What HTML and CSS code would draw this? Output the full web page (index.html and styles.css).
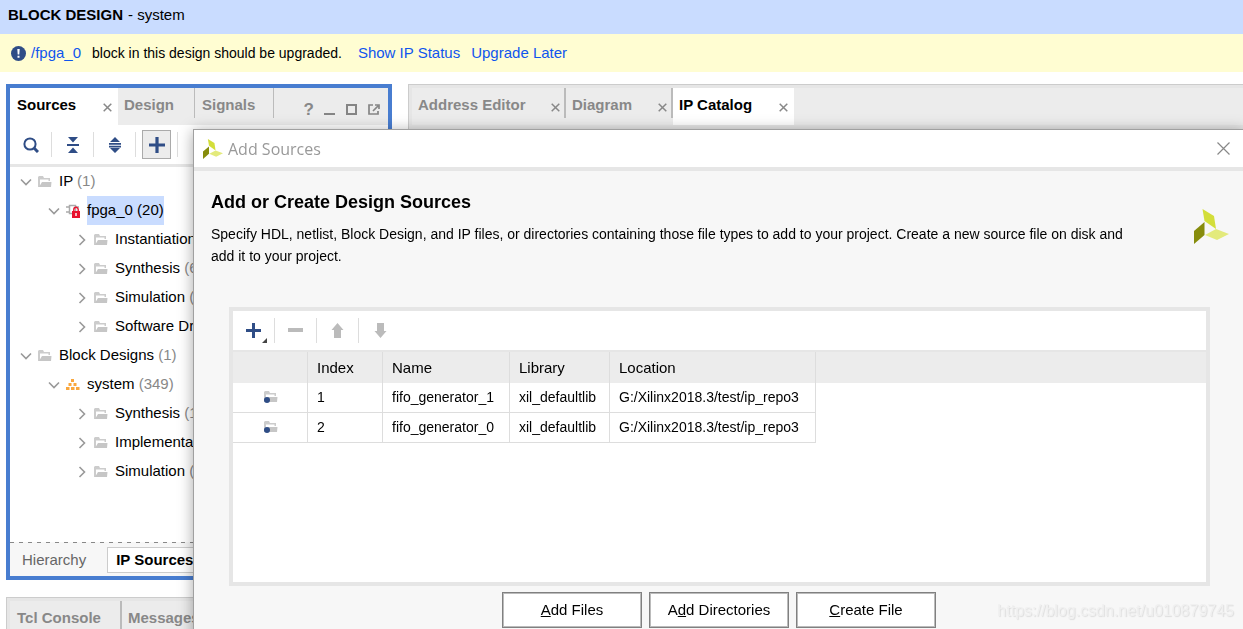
FILE: index.html
```
<!DOCTYPE html>
<html lang="en">
<head>
    <meta charset="UTF-8">
    <meta name="viewport" content="width=device-width, initial-scale=1.0">
    <title>Block Design - system</title>
    <link rel="stylesheet" href="styles.css">
</head>
<body>
    <!-- Shared icons -->
    <svg class="sprite" aria-hidden="true">
        <symbol id="close" viewBox="0 0 9 9"><path d="M.7.7l7.6 7.6M8.3.7L.7 8.3" fill="none" stroke="currentColor" stroke-width="1.5"/></symbol>
        <symbol id="down" viewBox="0 0 12 12"><path d="M1 3.5l5 5 5-5" fill="none" stroke="#999" stroke-width="1.6"/></symbol>
        <symbol id="right" viewBox="0 0 12 12"><path d="M3.5 1l5 5-5 5" fill="none" stroke="#999" stroke-width="1.6"/></symbol>
        <symbol id="folder" viewBox="0 0 14 12"><path d="M0 1l1-1h4l1 2h6v3h-1.500V3.500H2V11H0z" fill="#ccc"/><path d="M4 6h9.500L13 11H1z" fill="#c6c6c6"/></symbol>
        <symbol id="plus" viewBox="0 0 15 15"><path d="M6 0h3v6h6v3H9v6H6V9H0V6h6z" fill="#2f4d86"/></symbol>
        <symbol id="logo" viewBox="0 0 35 35"><path d="M8.500 0L20 7l2 13-11.500-8z" fill="#d3de3a"/><path d="M0 22l10.500-9v13L0 35z" fill="#868c0c"/><path d="M11 26l11-6 13 5-12 6z" fill="#e3ea7c"/></symbol>
    </svg>

    <header class="title-bar"><h1>BLOCK DESIGN</h1><span>- system</span></header>

    <div class="notice">
        <svg class="notice-icon" viewBox="0 0 15 15"><circle cx="7.500" cy="7.500" r="7.500" fill="#2f4d86"/><path d="M6.300 3h2.400l-.4 5.500H6.700zM6.500 9.800h2v2h-2z" fill="#fff"/></svg>
        <a href="#">/fpga_0</a>
        <span class="notice-text">block in this design should be upgraded.</span>
        <a href="#" class="notice-action">Show IP Status</a>
        <a href="#" class="notice-action">Upgrade Later</a>
    </div>

    <main class="workspace">
        <section class="panel sources">
            <div class="tabs">
                <div class="tab active tab-sources"><button>Sources</button><button class="close" aria-label="Close Sources"><svg><use href="#close"/></svg></button></div>
                <div class="tab tab-design"><button>Design</button></div>
                <div class="tab tab-signals"><button>Signals</button></div>
                <div class="window-tools">
                    <button aria-label="Help">?</button>
                    <button aria-label="Minimize"><svg viewBox="0 0 12 12"><path d="M0 10h11" stroke="#858585" stroke-width="2"/></svg></button>
                    <button aria-label="Maximize"><svg viewBox="0 0 12 12"><path d="M1 1h9v9H1z" fill="none" stroke="#858585" stroke-width="2"/></svg></button>
                    <button aria-label="Float"><svg viewBox="0 0 12 12"><path d="M5 1H1v9h9V7M5 7l5-5M7 1h4v4" fill="none" stroke="#858585" stroke-width="1.700"/></svg></button>
                </div>
            </div>
            <div class="toolbar">
                <button aria-label="Search"><svg viewBox="0 0 16 16"><circle cx="7" cy="7" r="5.600" fill="none" stroke="#2f4d86" stroke-width="2"/><path d="M11 11l4 4" stroke="#2f4d86" stroke-width="3"/></svg></button>
                <button aria-label="Collapse all"><svg viewBox="0 0 16 16"><path d="M3 0h10L8 5.500zM3 16h10l-5-5.500zM2 7h12v2H2z" fill="#2f4d86"/></svg></button>
                <button aria-label="Expand all"><svg viewBox="0 0 16 16"><path d="M8 0l5 5H3zM8 16l-5-5h10zM2 6h12v1.700H2zM2 8.700h12v1.700H2z" fill="#2f4d86"/></svg></button>
                <button class="pressed" aria-label="Add sources"><svg viewBox="0 0 15 15"><use href="#plus"/></svg></button>
                <span class="tool-end"></span>
            </div>
            <ul class="tree">
                <li>
                    <div class="node"><button aria-label="Collapse"><svg><use href="#down"/></svg></button><svg class="icon"><use href="#folder"/></svg><span class="label">IP <small>(1)</small></span></div>
                    <ul>
                        <li>
                            <div class="node selected"><button aria-label="Collapse"><svg><use href="#down"/></svg></button><svg class="icon" viewBox="0 0 14 14"><path d="M0 3h3M0 8h3M9 3h4M3.500 1.500h6v8h-6z" fill="none" stroke="#aaa" stroke-width="1.500"/><path d="M6 7h8v7H6z" fill="#e8112d"/><path d="M7.800 7V5.500a2.200 2.200 0 0 1 4.400 0V7" fill="none" stroke="#e8112d" stroke-width="1.400"/><path d="M9.300 9h1.400v3H9.300z" fill="#fff"/></svg><span class="label">fpga_0 (20)</span></div>
                            <ul>
                                <li class="node"><button aria-label="Expand"><svg><use href="#right"/></svg></button><svg class="icon"><use href="#folder"/></svg><span class="label">Instantiation</span></li>
                                <li class="node"><button aria-label="Expand"><svg><use href="#right"/></svg></button><svg class="icon"><use href="#folder"/></svg><span class="label">Synthesis <small>(6)</small></span></li>
                                <li class="node"><button aria-label="Expand"><svg><use href="#right"/></svg></button><svg class="icon"><use href="#folder"/></svg><span class="label">Simulation <small>(6)</small></span></li>
                                <li class="node"><button aria-label="Expand"><svg><use href="#right"/></svg></button><svg class="icon"><use href="#folder"/></svg><span class="label">Software Driver</span></li>
                            </ul>
                        </li>
                    </ul>
                </li>
                <li>
                    <div class="node"><button aria-label="Collapse"><svg><use href="#down"/></svg></button><svg class="icon"><use href="#folder"/></svg><span class="label">Block Designs <small>(1)</small></span></div>
                    <ul>
                        <li>
                            <div class="node"><button aria-label="Collapse"><svg><use href="#down"/></svg></button><svg class="icon" viewBox="0 0 14 14"><path d="M5 1h3v3H5zM2.500 5h3v3h-3zM7.500 5h3v3h-3zM0 9h3.500v3H0zM5 9h3.500v3H5zM10 9h3.500v3H10z" fill="#f9a73e"/></svg><span class="label">system <small>(349)</small></span></div>
                            <ul>
                                <li class="node"><button aria-label="Expand"><svg><use href="#right"/></svg></button><svg class="icon"><use href="#folder"/></svg><span class="label">Synthesis <small>(1)</small></span></li>
                                <li class="node"><button aria-label="Expand"><svg><use href="#right"/></svg></button><svg class="icon"><use href="#folder"/></svg><span class="label">Implementation</span></li>
                                <li class="node"><button aria-label="Expand"><svg><use href="#right"/></svg></button><svg class="icon"><use href="#folder"/></svg><span class="label">Simulation <small>(1)</small></span></li>
                            </ul>
                        </li>
                    </ul>
                </li>
            </ul>
            <div class="views">
                <button>Hierarchy</button>
                <button class="current">IP Sources</button>
            </div>
        </section>

        <section class="panel editor">
            <div class="tabs">
                <div class="tab tab-address"><button>Address Editor</button><button class="close" aria-label="Close Address Editor"><svg><use href="#close"/></svg></button></div>
                <div class="tab tab-diagram"><button>Diagram</button><button class="close" aria-label="Close Diagram"><svg><use href="#close"/></svg></button></div>
                <div class="tab active tab-catalog"><button>IP Catalog</button><button class="close" aria-label="Close IP Catalog"><svg><use href="#close"/></svg></button></div>
            </div>
        </section>
    </main>

    <section class="panel console">
        <div class="tabs">
            <div class="tab tab-tcl"><button>Tcl Console</button></div>
            <div class="tab tab-messages"><button>Messages</button></div>
        </div>
    </section>

    <div class="dialog" role="dialog" aria-labelledby="dialogTitle">
        <div class="dialog-title">
            <svg viewBox="0 0 35 35"><use href="#logo"/></svg>
            <span id="dialogTitle">Add Sources</span>
            <button aria-label="Close"><svg viewBox="0 0 13 13"><path d="M.5.5l12 12M12.500.5l-12 12" fill="none" stroke="#888" stroke-width="1.200"/></svg></button>
        </div>
        <div class="dialog-intro">
            <div>
                <h2>Add or Create Design Sources</h2>
                <p>Specify HDL, netlist, Block Design, and IP files, or directories containing those file types to add to your project. Create a new source file on disk and add it to your project.</p>
            </div>
            <svg class="brand" viewBox="0 0 35 35"><use href="#logo"/></svg>
        </div>
        <div class="file-box">
            <div class="file-tools">
                <button aria-label="Add"><svg viewBox="0 0 15 15"><use href="#plus"/></svg><span class="corner"></span></button>
                <button aria-label="Remove" disabled><svg viewBox="0 0 15 15"><path d="M0 5h15v4H0z" fill="#bbb"/></svg></button>
                <button aria-label="Move up" disabled><svg viewBox="0 0 15 15"><path d="M7.500 0l6 7H11v8H4V7H1.500z" fill="#bbb"/></svg></button>
                <button aria-label="Move down" disabled><svg viewBox="0 0 15 15"><path d="M7.500 15l6-7H11V0H4v8H1.500z" fill="#bbb"/></svg></button>
            </div>
            <table>
                <colgroup>
                    <col class="col-type"><col class="col-index"><col class="col-name"><col class="col-library"><col class="col-location"><col>
                </colgroup>
                <thead>
                    <tr><th></th><th>Index</th><th>Name</th><th>Library</th><th>Location</th><th></th></tr>
                </thead>
                <tbody>
                    <tr>
                        <td><svg viewBox="0 0 14 12"><use href="#folder"/><circle cx="3" cy="9" r="3" fill="#2f4d86"/></svg></td>
                        <td>1</td><td>fifo_generator_1</td><td>xil_defaultlib</td><td>G:/Xilinx2018.3/test/ip_repo3</td><td></td>
                    </tr>
                    <tr>
                        <td><svg viewBox="0 0 14 12"><use href="#folder"/><circle cx="3" cy="9" r="3" fill="#2f4d86"/></svg></td>
                        <td>2</td><td>fifo_generator_0</td><td>xil_defaultlib</td><td>G:/Xilinx2018.3/test/ip_repo3</td><td></td>
                    </tr>
                </tbody>
            </table>
        </div>
        <div class="dialog-buttons">
            <button><u>A</u>dd Files</button>
            <button>A<u>d</u>d Directories</button>
            <button><u>C</u>reate File</button>
        </div>
        <span class="watermark">https://blog.csdn.net/u010879745</span>
    </div>
</body>
</html>
```
FILE: styles.css
```
* {
    box-sizing: border-box;
}
body {
    display: flex;
    flex-direction: column;
    height: 100vh;
    margin: 0;
    overflow: hidden;
    background-color: #fff;
    color: #000;
    font: 15px/20px "Liberation Sans", Arial, sans-serif;
}
button {
    padding: 0;
    border: none;
    background: none;
    color: inherit;
    font: inherit;
}
svg {
    display: block;
    flex: none;
}
ul {
    margin: 0;
    padding: 0;
    list-style: none;
}
a {
    color: #0f55ee;
    text-decoration: none;
}
.sprite {
    display: none;
}

/* Top bars */
.title-bar {
    display: flex;
    gap: 5px;
    padding: 5px 8px 9px;
    background-color: #c9dcff;
}
.title-bar h1 {
    margin: 0;
    font-size: 15px;
    line-height: 20px;
}
.notice {
    display: flex;
    align-items: center;
    height: 38px;
    padding: 0 11px;
    background-color: #fffdd2;
}
.notice-icon {
    width: 15px;
    height: 15px;
    margin-right: 5px;
}
.notice-text {
    margin: 0 5px 0 11px;
    font-size: 14px;
}
.notice-action {
    margin-left: 11px;
}

/* Panels and tabs */
.workspace {
    display: grid;
    grid-template-columns: 386px 1fr;
    gap: 16px;
    flex: 1;
    min-height: 0;
    padding: 12px 0 0 6px;
}
.panel {
    display: flex;
    flex-direction: column;
    min-width: 0;
}
.sources {
    border: 4px solid #487dd0;
}
.editor,
.console {
    border: solid #ccc;
    border-width: 1px 0 0 1px;
    padding: 3px 0 0 3px;
    background-color: #e6e6e6;
}
.console {
    height: 32px;
    margin: 17px 0 0 6px;
}
.tabs {
    display: flex;
    flex: none;
    height: 37px;
    background-color: #ececec;
    color: #888;
    font-weight: bold;
}
.tab {
    display: flex;
    justify-content: space-between;
    height: 30px;
    padding: 7px 6px 3px;
    border-right: 1px solid #bbb;
}
.tab.active {
    height: 37px;
    border: none;
    background-color: #fff;
    color: #000;
}
.tab button {
    height: 20px;
    white-space: nowrap;
}
.tab .close {
    padding-top: 4px;
    color: #888;
}
.close svg {
    width: 9px;
    height: 9px;
}
.tab-sources {
    width: 108px;
    padding-left: 7px;
}
.tab-design {
    width: 77px;
}
.tab-signals {
    width: 79px;
    padding-left: 7px;
}
.editor .tab,
.console .tab {
    border-right-width: 2px;
}
.tab-address {
    width: 154px;
    padding-right: 4px;
}
.tab-diagram {
    width: 107px;
    padding-right: 4px;
}
.tab-catalog {
    width: 121px;
}
.console .tab {
    height: 40px;
}
.tab-tcl {
    width: 112px;
    padding-left: 7px;
}
.window-tools {
    display: flex;
    align-items: center;
    gap: 10px;
    margin-left: auto;
    padding: 6px 8px 0 0;
    font-size: 17px;
}
.window-tools svg {
    width: 12px;
    height: 12px;
}

/* Sources panel */
.toolbar {
    display: flex;
    align-items: center;
    height: 42px;
    border-bottom: 3px solid #e6e6e6;
}
.toolbar button,
.file-tools button {
    display: flex;
    align-items: center;
    justify-content: center;
    width: 42px;
    height: 25px;
    border-right: 1px solid #ddd;
}
.toolbar svg {
    width: 16px;
    height: 16px;
}
.toolbar .pressed {
    width: 29px;
    height: 29px;
    margin: 0 6px;
    border: 1px solid #aaa;
    background-color: #ececec;
}
.tool-end {
    height: 25px;
    border-left: 1px solid #ddd;
}
.tree {
    flex: 1;
    padding-left: 10px;
}
.tree ul {
    padding-left: 28px;
}
.node {
    display: flex;
    align-items: center;
    height: 29px;
    white-space: nowrap;
}
.node button svg {
    width: 12px;
    height: 12px;
}
.node .icon {
    width: 14px;
    height: 14px;
    margin: 0 7px 0 6px;
}
.label {
    padding-bottom: 2px;
    line-height: 27px;
}
.label small {
    color: #888;
    font-size: 15px;
}
.selected .label {
    background-color: #c9dcff;
}
.views {
    display: flex;
    align-items: center;
    height: 34px;
    padding: 1px 0 0 12px;
    background: repeating-linear-gradient(to right, #888 0 4px, #f7f7f7 4px 9px) top / 100% 1px no-repeat #f7f7f7;
    color: #666;
}
.views .current {
    height: 26px;
    margin-left: 21px;
    padding: 0 8px;
    border: 1px solid #ccc;
    background-color: #fff;
    color: #000;
    font-weight: bold;
}

/* Add Sources dialog, over the workspace */
.dialog {
    position: fixed;
    top: 129px;
    right: -2px;
    bottom: -20px;
    left: 193px;
    border: 1px solid #a0a0a0;
    background-color: #f7f7f7;
    box-shadow: 0 2px 14px rgba(0, 0, 0, 0.35);
}
.dialog-title {
    display: flex;
    align-items: center;
    gap: 5px;
    height: 41px;
    padding: 0 14px 0 9px;
    border-bottom: 4px solid #e6e6e6;
    background-color: #fff;
    color: #999;
    font: 16px/24px "Open Sans", sans-serif;
}
.dialog-title > svg {
    width: 20px;
    height: 20px;
}
.dialog-title button {
    margin-left: auto;
}
.dialog-title button svg {
    width: 13px;
    height: 13px;
}
.dialog-intro {
    display: flex;
    justify-content: space-between;
    padding: 19px 15px 0 17px;
}
.dialog-intro h2 {
    margin: 0 0 9px;
    font-size: 18px;
    line-height: 24px;
}
.dialog-intro p {
    max-width: 930px;
    margin: 0;
    font-size: 14px;
    line-height: 22px;
}
.brand {
    width: 35px;
    height: 35px;
    margin-top: 19px;
}
.file-box {
    height: 279px;
    margin: 40px 34px 0 35px;
    border: 4px solid #e6e6e6;
    background-color: #fff;
}
.file-tools {
    display: flex;
    align-items: center;
    height: 41px;
    border-bottom: 2px solid #e6e6e6;
}
.file-tools button {
    position: relative;
}
.file-tools button:last-child {
    border: none;
}
.file-tools svg {
    width: 15px;
    height: 15px;
}
.corner {
    position: absolute;
    right: 7px;
    bottom: 0;
    border-left: 5px solid transparent;
    border-bottom: 5px solid #444;
}
table {
    width: 100%;
    border-collapse: separate;
    border-spacing: 0;
    table-layout: fixed;
}
th,
td {
    height: 30px;
    padding: 0 8px 0 9px;
    border-right: 1px solid #ddd;
    text-align: left;
    font-weight: normal;
    white-space: nowrap;
}
th {
    height: 31px;
    background-color: #ececec;
}
td {
    padding-bottom: 2px;
    border-bottom: 1px solid #ddd;
    font-size: 14px;
}
th:last-child,
td:last-child {
    border: none;
}
td svg {
    width: 14px;
    height: 12px;
    margin: 0 auto;
}
.col-type,
.col-index {
    width: 75px;
}
.col-name {
    width: 127px;
}
.col-library {
    width: 100px;
}
.col-location {
    width: 206px;
}
.dialog-buttons {
    display: flex;
    justify-content: center;
    gap: 7px;
    margin-top: 6px;
}
.dialog-buttons button {
    width: 140px;
    height: 36px;
    border: 1px solid #808080;
    background-color: #fff;
    box-shadow: inset 0 0 0 1px #bbb;
}
.watermark {
    position: absolute;
    right: 10px;
    bottom: 27px;
    color: #f0f0f0;
    font-size: 16px;
    text-shadow: 1px 1px 1px #ddd;
}
```
